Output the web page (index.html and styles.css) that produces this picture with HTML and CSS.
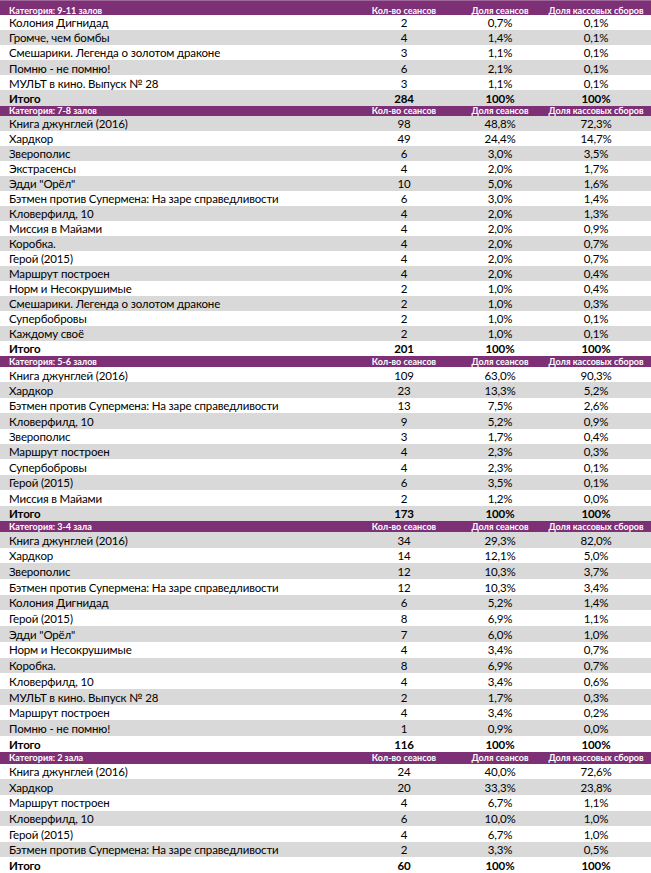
FILE: index.html
```html
<!DOCTYPE html>
<html lang="ru">
<head>
<meta charset="utf-8">
<link rel="stylesheet" href="styles.css">
</head>
<body>
<div class="sheet">
  <section class="cat cat1">
    <div class="row head first"><span class="name">Категория: 9-11 залов</span><span>Кол-во сеансов</span><span>Доля сеансов</span><span>Доля кассовых сборов</span></div>
    <div class="row w"><span class="name">Колония Дигнидад</span><span>2</span><span>0,7%</span><span>0,1%</span></div>
    <div class="row g"><span class="name">Громче, чем бомбы</span><span>4</span><span>1,4%</span><span>0,1%</span></div>
    <div class="row w"><span class="name">Смешарики. Легенда о золотом драконе</span><span>3</span><span>1,1%</span><span>0,1%</span></div>
    <div class="row g"><span class="name">Помню - не помню!</span><span>6</span><span>2,1%</span><span>0,1%</span></div>
    <div class="row w"><span class="name">МУЛЬТ в кино. Выпуск № 28</span><span>3</span><span>1,1%</span><span>0,1%</span></div>
    <div class="row g total"><span class="name">Итого</span><span>284</span><span>100%</span><span>100%</span></div>
  </section>
  <section class="cat cat2">
    <div class="row head"><span class="name">Категория: 7-8 залов</span><span>Кол-во сеансов</span><span>Доля сеансов</span><span>Доля кассовых сборов</span></div>
    <div class="row g"><span class="name">Книга джунглей (2016)</span><span>98</span><span>48,8%</span><span>72,3%</span></div>
    <div class="row w"><span class="name">Хардкор</span><span>49</span><span>24,4%</span><span>14,7%</span></div>
    <div class="row g"><span class="name">Зверополис</span><span>6</span><span>3,0%</span><span>3,5%</span></div>
    <div class="row w"><span class="name">Экстрасенсы</span><span>4</span><span>2,0%</span><span>1,7%</span></div>
    <div class="row g"><span class="name">Эдди "Орёл"</span><span>10</span><span>5,0%</span><span>1,6%</span></div>
    <div class="row w"><span class="name">Бэтмен против Супермена: На заре справедливости</span><span>6</span><span>3,0%</span><span>1,4%</span></div>
    <div class="row g"><span class="name">Кловерфилд, 10</span><span>4</span><span>2,0%</span><span>1,3%</span></div>
    <div class="row w"><span class="name">Миссия в Майами</span><span>4</span><span>2,0%</span><span>0,9%</span></div>
    <div class="row g"><span class="name">Коробка.</span><span>4</span><span>2,0%</span><span>0,7%</span></div>
    <div class="row w"><span class="name">Герой (2015)</span><span>4</span><span>2,0%</span><span>0,7%</span></div>
    <div class="row g"><span class="name">Маршрут построен</span><span>4</span><span>2,0%</span><span>0,4%</span></div>
    <div class="row w"><span class="name">Норм и Несокрушимые</span><span>2</span><span>1,0%</span><span>0,4%</span></div>
    <div class="row g"><span class="name">Смешарики. Легенда о золотом драконе</span><span>2</span><span>1,0%</span><span>0,3%</span></div>
    <div class="row w"><span class="name">Супербобровы</span><span>2</span><span>1,0%</span><span>0,1%</span></div>
    <div class="row g"><span class="name">Каждому своё</span><span>2</span><span>1,0%</span><span>0,1%</span></div>
    <div class="row w total"><span class="name">Итого</span><span>201</span><span>100%</span><span>100%</span></div>
  </section>
  <section class="cat cat3">
    <div class="row head"><span class="name">Категория: 5-6 залов</span><span>Кол-во сеансов</span><span>Доля сеансов</span><span>Доля кассовых сборов</span></div>
    <div class="row w"><span class="name">Книга джунглей (2016)</span><span>109</span><span>63,0%</span><span>90,3%</span></div>
    <div class="row g"><span class="name">Хардкор</span><span>23</span><span>13,3%</span><span>5,2%</span></div>
    <div class="row w"><span class="name">Бэтмен против Супермена: На заре справедливости</span><span>13</span><span>7,5%</span><span>2,6%</span></div>
    <div class="row g"><span class="name">Кловерфилд, 10</span><span>9</span><span>5,2%</span><span>0,9%</span></div>
    <div class="row w"><span class="name">Зверополис</span><span>3</span><span>1,7%</span><span>0,4%</span></div>
    <div class="row g"><span class="name">Маршрут построен</span><span>4</span><span>2,3%</span><span>0,3%</span></div>
    <div class="row w"><span class="name">Супербобровы</span><span>4</span><span>2,3%</span><span>0,1%</span></div>
    <div class="row g"><span class="name">Герой (2015)</span><span>6</span><span>3,5%</span><span>0,1%</span></div>
    <div class="row w"><span class="name">Миссия в Майами</span><span>2</span><span>1,2%</span><span>0,0%</span></div>
    <div class="row g total"><span class="name">Итого</span><span>173</span><span>100%</span><span>100%</span></div>
  </section>
  <section class="cat cat4">
    <div class="row head"><span class="name">Категория: 3-4 зала</span><span>Кол-во сеансов</span><span>Доля сеансов</span><span>Доля кассовых сборов</span></div>
    <div class="row g"><span class="name">Книга джунглей (2016)</span><span>34</span><span>29,3%</span><span>82,0%</span></div>
    <div class="row w"><span class="name">Хардкор</span><span>14</span><span>12,1%</span><span>5,0%</span></div>
    <div class="row g"><span class="name">Зверополис</span><span>12</span><span>10,3%</span><span>3,7%</span></div>
    <div class="row w"><span class="name">Бэтмен против Супермена: На заре справедливости</span><span>12</span><span>10,3%</span><span>3,4%</span></div>
    <div class="row g"><span class="name">Колония Дигнидад</span><span>6</span><span>5,2%</span><span>1,4%</span></div>
    <div class="row w"><span class="name">Герой (2015)</span><span>8</span><span>6,9%</span><span>1,1%</span></div>
    <div class="row g"><span class="name">Эдди "Орёл"</span><span>7</span><span>6,0%</span><span>1,0%</span></div>
    <div class="row w"><span class="name">Норм и Несокрушимые</span><span>4</span><span>3,4%</span><span>0,7%</span></div>
    <div class="row g"><span class="name">Коробка.</span><span>8</span><span>6,9%</span><span>0,7%</span></div>
    <div class="row w"><span class="name">Кловерфилд, 10</span><span>4</span><span>3,4%</span><span>0,6%</span></div>
    <div class="row g"><span class="name">МУЛЬТ в кино. Выпуск № 28</span><span>2</span><span>1,7%</span><span>0,3%</span></div>
    <div class="row w"><span class="name">Маршрут построен</span><span>4</span><span>3,4%</span><span>0,2%</span></div>
    <div class="row g"><span class="name">Помню - не помню!</span><span>1</span><span>0,9%</span><span>0,0%</span></div>
    <div class="row w total"><span class="name">Итого</span><span>116</span><span>100%</span><span>100%</span></div>
  </section>
  <section class="cat cat5">
    <div class="row head"><span class="name">Категория: 2 зала</span><span>Кол-во сеансов</span><span>Доля сеансов</span><span>Доля кассовых сборов</span></div>
    <div class="row w"><span class="name">Книга джунглей (2016)</span><span>24</span><span>40,0%</span><span>72,6%</span></div>
    <div class="row g"><span class="name">Хардкор</span><span>20</span><span>33,3%</span><span>23,8%</span></div>
    <div class="row w"><span class="name">Маршрут построен</span><span>4</span><span>6,7%</span><span>1,1%</span></div>
    <div class="row g"><span class="name">Кловерфилд, 10</span><span>6</span><span>10,0%</span><span>1,0%</span></div>
    <div class="row w"><span class="name">Герой (2015)</span><span>4</span><span>6,7%</span><span>1,0%</span></div>
    <div class="row g"><span class="name">Бэтмен против Супермена: На заре справедливости</span><span>2</span><span>3,3%</span><span>0,5%</span></div>
    <div class="row w total"><span class="name">Итого</span><span>60</span><span>100%</span><span>100%</span></div>
  </section>
</div>
</body>
</html>
```

FILE: styles.css
```css
* { box-sizing: border-box; }
html, body { margin: 0; padding: 0; background: #ffffff; }
body {
  font-family: Lato, "Liberation Sans", sans-serif;
  font-size: 11.5px;
  letter-spacing: -0.15px;
  color: #000000;
}
.sheet { width: 651px; display: flex; flex-direction: column; }
.cat { --rh: 15px; --hh: 11px; display: flex; flex-direction: column; }
.cat1 { --rh: 15.1px; }
.cat2 { --rh: 15px; --hh: 10.5px; }
.cat3 { --rh: 15.4px; --hh: 11px; }
.cat4 { --rh: 15.71px; --hh: 11px; }
.cat5 { --rh: 15.57px; --hh: 12px; }
.row {
  display: grid;
  grid-template-columns: 356px 96px 96px 96px 1fr;
  align-items: center;
  height: var(--rh);
  padding-top: 1px;
  line-height: 1;
  text-align: center;
  white-space: nowrap;
}
.row .name { text-align: left; padding-left: 9px; }
.row.w { background: #ffffff; }
.row.g { background: #d9d9d9; }
.row.total { font-weight: 700; }
.row.head {
  height: var(--hh);
  padding-top: 0;
  background: #7e3077;
  color: #ffffff;
  font-size: 9px;
  letter-spacing: 0;
  font-weight: 700;
}
.row.head.first {
  height: 15px;
  padding-top: 4px;
  border-top: 1px solid #a0689b;
}
```
